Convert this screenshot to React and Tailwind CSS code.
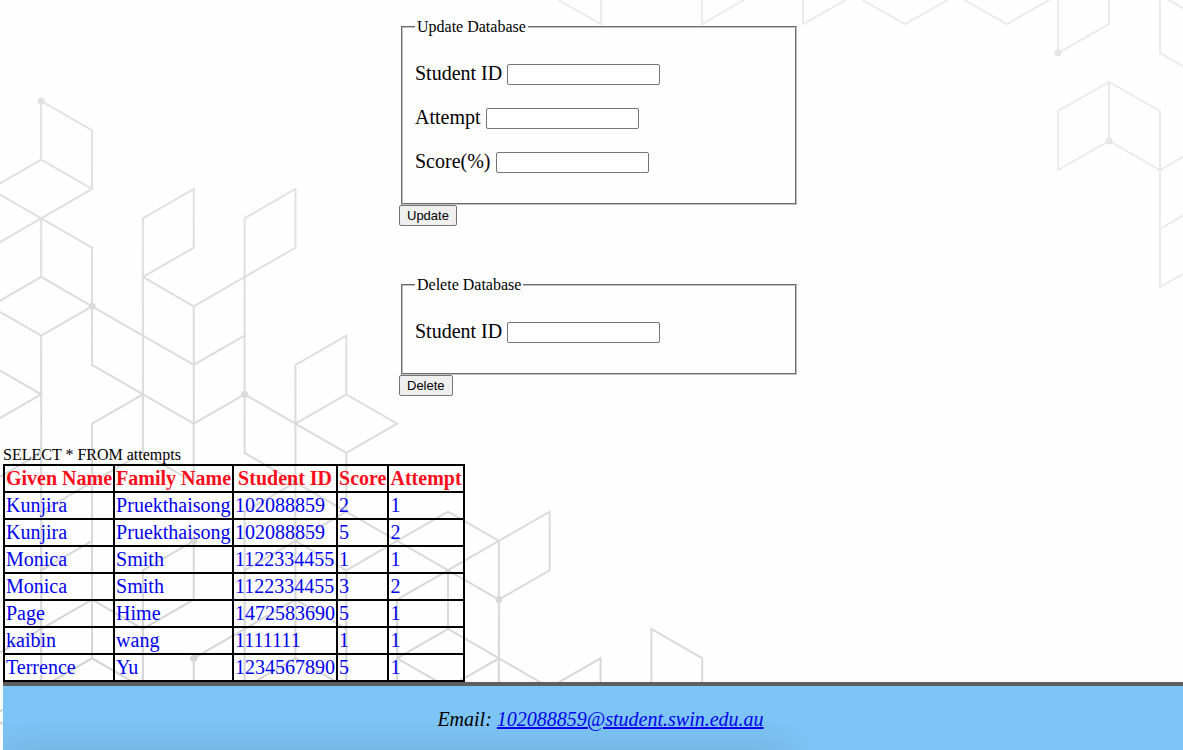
import React from "react";

const COLUMNS = ["Given Name", "Family Name", "Student ID", "Score", "Attempt"];

const ATTEMPTS = [
  ["Kunjira", "Pruekthaisong", "102088859", "2", "1"],
  ["Kunjira", "Pruekthaisong", "102088859", "5", "2"],
  ["Monica", "Smith", "1122334455", "1", "1"],
  ["Monica", "Smith", "1122334455", "3", "2"],
  ["Page", "Hime", "1472583690", "5", "1"],
  ["kaibin", "wang", "1111111", "1", "1"],
  ["Terrence", "Yu", "1234567890", "5", "1"],
];

// Isometric lattice of the lower left corner, as column,row pairs.
const LATTICE = [
  "0,0 0,2 1,3 0,4 -1,5",
  "0,0 1,1 1,3",
  "0,2 -1,3 0,4 0,6 1,7 2,8 3,9 4,8",
  "0,4 1,5 1,9 3,11 4,10 5,11",
  "0,6 -1,7 0,8 1,7",
  "0,8 0,20 -1,21 0,22",
  "-1,9 0,10 -1,11",
  "2,12 2,4 3,3 3,5 2,6 3,7 5,5 5,3 4,4 4,12 5,13",
  "3,7 3,13 2,12 0,14",
  "2,10 1,11 1,19",
  "0,12 -1,13",
  "1,15 0,16",
  "3,15 2,16 2,20",
  "3,15 3,17 2,18 1,17 -1,19",
  "0,20 1,19 2,20",
  "3,20 3,19 5,17 6,18",
  "5,19 5,9 6,8 6,10 5,11 6,12 7,11 6,10",
  "6,12 6,14",
  "4,20 4,14 5,13 7,15 8,14 9,15 10,14 10,16 9,17 7,15 6,16 5,15",
  "6,14 4,16",
  "4,20 5,19 6,20 6,16",
  "9,15 7,17 7,20",
  "8,16 8,18 7,19 8,20 9,19",
  "8,18 10,20 11,19 11,20",
  "9,15 9,20",
  "12,20 12,18 13,19 13,20",
];

const LATTICE_DOTS = [[0, 0], [1, 7], [4, 10], [3, 15], [3, 19], [9, 17]];

const UPPER_LINES = [
  "558,0 601,24 601,0",
  "702,0 702,24 744,0",
  "803,0 803,24 846,0",
  "862,0 905,24 948,0",
  "964,0 1007,24 1058,-5 1058,53 1109,24 1109,0",
  "1160,0 1160,53 1211,82",
  "1160,-5 1211,24",
  "1109,141 1109,82 1058,111 1058,170 1109,141 1160,170 1211,141",
  "1109,82 1160,111 1160,287 1211,258",
  "1160,229 1211,199",
];

const px = (col) => 41.2 + col * 50.85;
const py = (row) => 101 + row * 29.33;
const toPoints = (line) =>
  line
    .split(" ")
    .map((pair) => pair.split(",").map(Number))
    .map(([c, r]) => `${px(c)},${py(r)}`)
    .join(" ");

function Backdrop() {
  return (
    <svg
      className="pointer-events-none absolute top-0 left-0 -z-10"
      width="1211"
      height="750"
      fill="none"
      strokeWidth="2"
      aria-hidden="true"
    >
      <defs>
        <linearGradient id="fade" gradientUnits="userSpaceOnUse" x1="100" y1="700" x2="300" y2="100">
          <stop offset="0" stopColor="#d3d3d3" />
          <stop offset="1" stopColor="#e3e4e4" />
        </linearGradient>
      </defs>
      <g stroke="url(#fade)">
        {LATTICE.map((line) => (
          <polyline key={line} points={toPoints(line)} />
        ))}
      </g>
      {LATTICE_DOTS.map(([c, r]) => (
        <circle key={`${c}-${r}`} cx={px(c)} cy={py(r)} r="3.6" fill="url(#fade)" />
      ))}
      <g stroke="#ebebeb">
        {UPPER_LINES.map((line) => (
          <polyline key={line} points={line} />
        ))}
      </g>
      <circle cx="1058" cy="53" r="3.6" fill="#e6e6e6" />
      <circle cx="1109" cy="141" r="3.6" fill="#e6e6e6" />
    </svg>
  );
}

function Field({ id, label }) {
  return (
    <div className="flex h-6 items-start gap-[5px]">
      <label htmlFor={id} className="text-[20px] leading-[22px]">
        {label}
      </label>
      <input
        id={id}
        type="text"
        className="mt-[2px] h-[21px] w-[153px] rounded-[2px] border border-[#767676] bg-white px-[2px] font-['Liberation_Sans',Arial,sans-serif] text-[13px]"
      />
    </div>
  );
}

function DatabaseForm({ title, action, fields }) {
  return (
    <form className="w-full max-w-[400px]" onSubmit={(event) => event.preventDefault()}>
      <fieldset className="mx-[2px] border-2 border-[#c0c0c0] px-3 pt-[26px] pb-[29px] [border-style:groove]">
        <legend className="px-[2px] text-[16px] leading-[18px]">{title}</legend>
        <div className="flex flex-col gap-5">
          {fields.map((field) => (
            <Field key={field} id={`${action}-${field}`} label={field} />
          ))}
        </div>
      </fieldset>
      <button
        type="submit"
        className="block h-[21px] rounded-[2px] border border-[#767676] bg-[#efefef] px-[7px] font-['Liberation_Sans',Arial,sans-serif] text-[13px] leading-[19px]"
      >
        {action}
      </button>
    </form>
  );
}

export default function App() {
  return (
    <div className="relative isolate flex min-h-screen flex-col overflow-hidden bg-[#fefefe] pl-[3px] font-['Liberation_Serif','Times_New_Roman',serif] text-black">
      <Backdrop />
      <main>
        <div className="flex flex-col items-center gap-[50px] pt-[18px] pb-[50px] pl-3">
          <DatabaseForm
            title="Update Database"
            action="Update"
            fields={["Student ID", "Attempt", "Score(%)"]}
          />
          <DatabaseForm title="Delete Database" action="Delete" fields={["Student ID"]} />
        </div>
        <p className="text-[16px] leading-[18px]">SELECT * FROM attempts</p>
        <table className="border-collapse border-2 border-black text-[20px] leading-[23px]">
          <thead>
            <tr>
              {COLUMNS.map((name) => (
                <th key={name} scope="col" className="border-2 border-black p-px text-center font-bold text-[#fc0d1b]">
                  {name}
                </th>
              ))}
            </tr>
          </thead>
          <tbody className="text-[#0000ee]">
            {ATTEMPTS.map((row, index) => (
              <tr key={index}>
                {row.map((value, column) => (
                  <td key={column} className="border-2 border-black p-px">
                    {value}
                  </td>
                ))}
              </tr>
            ))}
          </tbody>
        </table>
      </main>
      <footer className="relative flex-1 overflow-hidden border-t-4 border-[#5e5e5e] bg-[#7dc5f6] py-[22px] pl-[15px] text-center text-[20px] leading-[23px] italic">
        <p>
          Email:{" "}
          <a href="mailto:102088859@student.swin.edu.au" className="text-[#0000ee] underline">
            102088859@student.swin.edu.au
          </a>
        </p>
        <div className="pointer-events-none absolute top-full left-0 h-5 w-2/3 shadow-[0_0_36px_rgba(0,0,0,0.2)]" />
      </footer>
    </div>
  );
}
